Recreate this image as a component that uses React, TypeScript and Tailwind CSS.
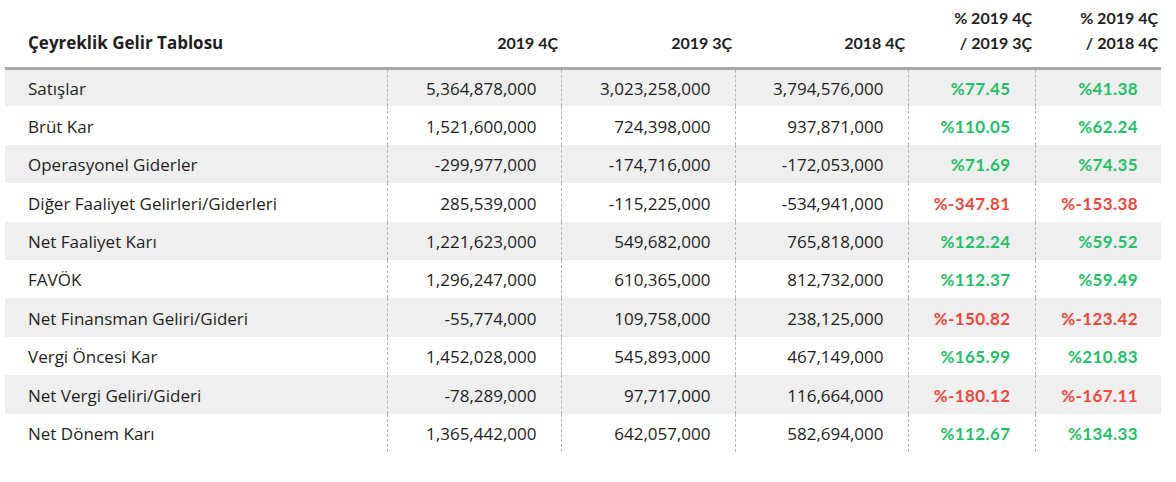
const rows: [string, string, string, string, string, string][] = [
  ['Satışlar', '5,364,878,000', '3,023,258,000', '3,794,576,000', '%77.45', '%41.38'],
  ['Brüt Kar', '1,521,600,000', '724,398,000', '937,871,000', '%110.05', '%62.24'],
  ['Operasyonel Giderler', '-299,977,000', '-174,716,000', '-172,053,000', '%71.69', '%74.35'],
  ['Diğer Faaliyet Gelirleri/Giderleri', '285,539,000', '-115,225,000', '-534,941,000', '%-347.81', '%-153.38'],
  ['Net Faaliyet Karı', '1,221,623,000', '549,682,000', '765,818,000', '%122.24', '%59.52'],
  ['FAVÖK', '1,296,247,000', '610,365,000', '812,732,000', '%112.37', '%59.49'],
  ['Net Finansman Geliri/Gideri', '-55,774,000', '109,758,000', '238,125,000', '%-150.82', '%-123.42'],
  ['Vergi Öncesi Kar', '1,452,028,000', '545,893,000', '467,149,000', '%165.99', '%210.83'],
  ['Net Vergi Geliri/Gideri', '-78,289,000', '97,717,000', '116,664,000', '%-180.12', '%-167.11'],
  ['Net Dönem Karı', '1,365,442,000', '642,057,000', '582,694,000', '%112.67', '%134.33'],
];

const pctClass = (v: string) =>
  v.startsWith('%-') ? 'text-[#f0463c]' : 'text-[#1fc167]';

export default function App() {
  return (
    <div className="w-[1176px] h-[482px] bg-white pl-[5px] font-['Open_Sans',sans-serif] text-[#1e1e1e]">
      <table className="w-[1156px] border-collapse table-fixed">
        <colgroup>
          <col className="w-[382px]" />
          <col className="w-[174px]" />
          <col className="w-[174px]" />
          <col className="w-[173px]" />
          <col className="w-[127px]" />
          <col className="w-[126px]" />
        </colgroup>
        <thead>
          <tr className="h-[68px] border-b-[3px] border-[#a9a9a9] text-[16px] font-bold leading-[25px] align-bottom font-['Lato',sans-serif]">
            <th className="text-left pl-[23px] pb-[12px] font-['Open_Sans',sans-serif] font-bold text-[17px]">Çeyreklik Gelir Tablosu</th>
            <th className="text-right pr-[3px] pb-[12px]">2019 4Ç</th>
            <th className="text-right pr-[3px] pb-[12px]">2019 3Ç</th>
            <th className="text-right pr-[3px] pb-[12px]">2018 4Ç</th>
            <th className="text-right pr-[3px] pb-[12px]">
              % 2019 4Ç
              <br />/ 2019 3Ç
            </th>
            <th className="text-right pr-[3px] pb-[12px]">
              % 2019 4Ç
              <br />/ 2018 4Ç
            </th>
          </tr>
        </thead>
        <tbody className="text-[17px]">
          {rows.map((r, i) => (
            <tr key={r[0]} className={`h-[38.4px] ${i % 2 === 0 ? 'bg-[#efefef]' : 'bg-white'}`}>
              <td className="pl-[23px] pt-[2px]">{r[0]}</td>
              <td className="text-right pr-[24px] pt-[2px] border-l border-dashed border-[#b5b5b5]">{r[1]}</td>
              <td className="text-right pr-[24px] pt-[2px] border-l border-dashed border-[#b5b5b5]">{r[2]}</td>
              <td className="text-right pr-[24px] pt-[2px] border-l border-dashed border-[#b5b5b5]">{r[3]}</td>
              <td className={`text-right pr-[24px] pt-[2px] font-['Lato',sans-serif] font-bold text-[17px] tracking-[0.4px] border-l border-dashed border-[#b5b5b5] ${pctClass(r[4])}`}>{r[4]}</td>
              <td className={`text-right pr-[23px] pt-[2px] font-['Lato',sans-serif] font-bold text-[17px] tracking-[0.4px] border-l border-dashed border-[#b5b5b5] ${pctClass(r[5])}`}>{r[5]}</td>
            </tr>
          ))}
        </tbody>
      </table>
    </div>
  );
}
